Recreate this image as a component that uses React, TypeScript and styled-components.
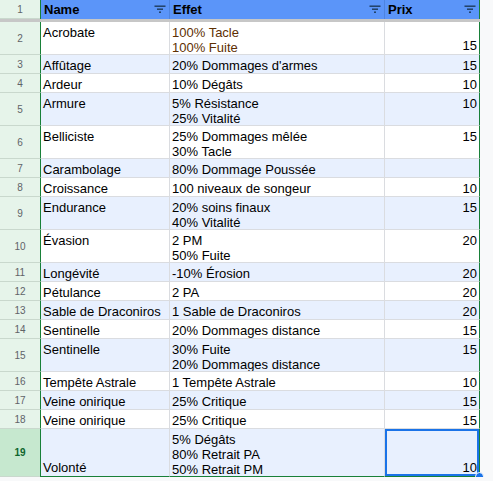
import React from 'react';
import styled, { createGlobalStyle, css } from 'styled-components';

type VAlign = 'top' | 'bottom';

interface Item {
  n: number;
  name: string;
  effet: string[];
  prix: string;
  lines: number;
  nameAlign?: VAlign;
  prixAlign?: VAlign;
  tint?: string;
}

const ITEMS: Item[] = [
  { n: 2, name: 'Acrobate', effet: ['100% Tacle', '100% Fuite'], prix: '15', lines: 2, prixAlign: 'bottom', tint: '#5e3003' },
  { n: 3, name: 'Affûtage', effet: ["20% Dommages d'armes"], prix: '15', lines: 1 },
  { n: 4, name: 'Ardeur', effet: ['10% Dégâts'], prix: '10', lines: 1 },
  { n: 5, name: 'Armure', effet: ['5% Résistance', '25% Vitalité'], prix: '10', lines: 2 },
  { n: 6, name: 'Belliciste', effet: ['25% Dommages mêlée', '30% Tacle'], prix: '15', lines: 2 },
  { n: 7, name: 'Carambolage', effet: ['80% Dommage Poussée'], prix: '', lines: 1 },
  { n: 8, name: 'Croissance', effet: ['100 niveaux de songeur'], prix: '10', lines: 1 },
  { n: 9, name: 'Endurance', effet: ['20% soins finaux', '40% Vitalité'], prix: '15', lines: 2 },
  { n: 10, name: 'Évasion', effet: ['2 PM', '50% Fuite'], prix: '20', lines: 2 },
  { n: 11, name: 'Longévité', effet: ['-10% Érosion'], prix: '20', lines: 1 },
  { n: 12, name: 'Pétulance', effet: ['2 PA'], prix: '20', lines: 1 },
  { n: 13, name: 'Sable de Draconiros', effet: ['1 Sable de Draconiros'], prix: '20', lines: 1 },
  { n: 14, name: 'Sentinelle', effet: ['20% Dommages distance'], prix: '15', lines: 1 },
  { n: 15, name: 'Sentinelle', effet: ['30% Fuite', '20% Dommages distance'], prix: '15', lines: 2 },
  { n: 16, name: 'Tempête Astrale', effet: ['1 Tempête Astrale'], prix: '10', lines: 1 },
  { n: 17, name: 'Veine onirique', effet: ['25% Critique'], prix: '15', lines: 1 },
  { n: 18, name: 'Veine onirique', effet: ['25% Critique'], prix: '15', lines: 1 },
  { n: 19, name: 'Volonté', effet: ['5% Dégâts', '80% Retrait PA', '50% Retrait PM'], prix: '10', lines: 3, nameAlign: 'bottom', prixAlign: 'bottom' },
];

const HEIGHTS: Record<number, number> = { 1: 19, 2: 33, 3: 48 };

const GlobalStyle = createGlobalStyle`
  html, body {
    margin: 0;
    padding: 0;
    background: #f8f9fa;
  }
  body {
    font-family: 'Liberation Sans', Arial, sans-serif;
    font-size: 13px;
    color: #000;
  }
`;

const Sheet = styled.div`
  width: 480px;
  display: flex;
  flex-direction: column;
`;

const Row = styled.div<{ $h: number; $stripe?: boolean }>`
  display: grid;
  grid-template-columns: 40px 130px 215px 95px;
  height: ${(p) => p.$h}px;
  background: ${(p) => (p.$stripe ? '#e8f0fe' : '#ffffff')};
`;

const FrozenBar = styled.div`
  height: 3px;
  background: #c7c7c7;
`;

const RowNum = styled.div<{ $active?: boolean }>`
  display: flex;
  align-items: center;
  justify-content: center;
  background: ${(p) => (p.$active ? '#c6e8cf' : '#e6f4ea')};
  border-bottom: 1px solid #c9d8cd;
  color: ${(p) => (p.$active ? '#0d652d' : '#5f6368')};
  font-family: 'Liberation Sans', Arial, sans-serif;
  font-size: 10px;
  font-weight: ${(p) => (p.$active ? 700 : 400)};
`;

const HeadCell = styled.div<{ $first?: boolean; $last?: boolean }>`
  display: flex;
  align-items: center;
  justify-content: space-between;
  padding: 0 3px 1px 3px;
  background: #5b95f9;
  font-weight: 700;
  border-right: 1px solid ${(p) => (p.$last ? '#188038' : '#4d84e0')};
  ${(p) => p.$first && css`border-left: 1px solid #188038;`}
`;

const Cell = styled.div<{
  $valign?: VAlign;
  $right?: boolean;
  $first?: boolean;
  $last?: boolean;
  $bottom?: boolean;
  $color?: string;
}>`
  display: flex;
  flex-direction: column;
  justify-content: ${(p) => (p.$valign === 'bottom' ? 'flex-end' : 'flex-start')};
  align-items: ${(p) => (p.$right ? 'flex-end' : 'flex-start')};
  padding: 3px 2px 1px 2px;
  line-height: 15px;
  white-space: nowrap;
  overflow: hidden;
  color: ${(p) => p.$color || '#000'};
  border-right: 1px solid ${(p) => (p.$last ? '#188038' : '#dadce0')};
  border-bottom: 1px solid ${(p) => (p.$bottom ? '#188038' : '#dadce0')};
  ${(p) => p.$first && css`border-left: 1px solid #188038; padding-left: 2px;`}
`;

const SelectedCell = styled(Cell)`
  position: relative;
  overflow: visible;
  box-shadow: inset 0 0 0 2px #1a73e8;
`;

const Handle = styled.span`
  position: absolute;
  right: -5px;
  bottom: -5px;
  width: 7px;
  height: 7px;
  border-radius: 50%;
  background: #1a73e8;
  border: 1px solid #fff;
`;

function FilterIcon() {
  return (
    <svg width="12" height="9" viewBox="0 0 12 9">
      <rect x="0.5" y="0.5" width="11" height="1.4" fill="#1d3b5c" />
      <rect x="3" y="3.5" width="6" height="1.4" fill="#1d3b5c" />
      <rect x="5" y="6.5" width="2" height="1.4" fill="#1d3b5c" />
    </svg>
  );
}

export default function App() {
  return (
    <>
      <GlobalStyle />
      <Sheet>
        <Row $h={19}>
          <RowNum>1</RowNum>
          <HeadCell $first>
            Name
            <FilterIcon />
          </HeadCell>
          <HeadCell>
            Effet
            <FilterIcon />
          </HeadCell>
          <HeadCell $last>
            Prix
            <FilterIcon />
          </HeadCell>
        </Row>
        <FrozenBar />
        {ITEMS.map((it) => {
          const last = it.n === 19;
          const PrixCell = last ? SelectedCell : Cell;
          return (
            <Row key={it.n} $h={HEIGHTS[it.lines]} $stripe={it.n % 2 === 1}>
              <RowNum $active={last}>{it.n}</RowNum>
              <Cell $first $bottom={last} $valign={it.nameAlign}>
                {it.name}
              </Cell>
              <Cell $bottom={last} $color={it.tint}>
                {it.effet.map((line) => (
                  <span key={line}>{line}</span>
                ))}
              </Cell>
              <PrixCell $last $right $bottom={last} $valign={it.prixAlign}>
                {it.prix}
                {last && <Handle />}
              </PrixCell>
            </Row>
          );
        })}
      </Sheet>
    </>
  );
}
